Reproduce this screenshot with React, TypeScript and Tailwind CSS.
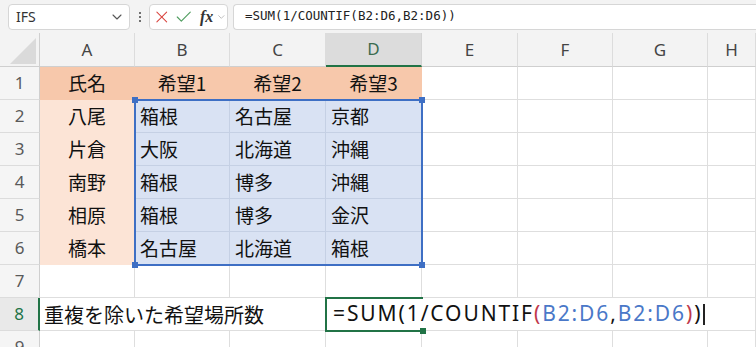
import { Check, ChevronDown, X } from "lucide-react";

const head = ["氏名", "希望1", "希望2", "希望3"];
const people = [
  ["八尾", "箱根", "名古屋", "京都"],
  ["片倉", "大阪", "北海道", "沖縄"],
  ["南野", "箱根", "博多", "沖縄"],
  ["相原", "箱根", "博多", "金沢"],
  ["橋本", "名古屋", "北海道", "箱根"],
];
const letters = ["A", "B", "C", "D", "E", "F", "G", "H"];

const jp = "font-['Noto_Sans_CJK_JP',sans-serif]";
const ui = "font-['Noto_Sans',sans-serif]";

function RowHead({ n, active }: { n: number; active?: boolean }) {
  return (
    <div
      className={`flex items-center justify-center border-b border-[#dcdcdc] text-[17px] ${ui} ${
        active
          ? "border-r-2 border-r-[#217346] bg-[#e9e9e9] text-[#217346]"
          : "border-r border-r-[#cfcfcf] bg-[#f5f5f5] text-[#5a5a5a]"
      }`}
    >
      {n}
    </div>
  );
}

function Blank() {
  return <div className="border-b border-r border-[#dedede] bg-white" />;
}

export default function App() {
  return (
    <div className="h-[347px] w-[756px] overflow-hidden bg-white">
      {/* formula bar */}
      <div className="flex h-[33px] items-center bg-[#f3f3f3] pl-2">
        <div className="flex h-[26px] w-[122px] items-center justify-between rounded-[4px] border border-[#d6d6d6] bg-white pl-[7px] pr-[4px]">
          <span className={`text-[14px] text-[#333] ${ui}`}>IFS</span>
          <ChevronDown size={16} strokeWidth={1.6} className="text-[#555]" />
        </div>
        <div className="ml-[9px] flex flex-col gap-[2px]">
          <span className="h-[2px] w-[2px] rounded-full bg-[#444]" />
          <span className="h-[2px] w-[2px] rounded-full bg-[#444]" />
          <span className="h-[2px] w-[2px] rounded-full bg-[#444]" />
        </div>
        <div className="ml-[8px] flex h-[26px] w-[79px] items-center rounded-[4px] border border-[#d6d6d6] bg-white">
          <X size={22} strokeWidth={1.3} className="ml-[2px] text-[#d9423d]" />
          <Check size={22} strokeWidth={1.4} className="ml-[2px] text-[#4f9d5f]" />
          <span className="ml-[7px] font-['Liberation_Serif',serif] text-[16px] font-bold italic leading-none text-[#333]">
            fx
          </span>
          <ChevronDown size={12} strokeWidth={1.4} className="ml-[3px] text-[#999]" />
        </div>
        <div className="ml-[5px] flex h-[26px] flex-1 items-center rounded-l-[4px] border border-r-0 border-[#d6d6d6] bg-white pl-[11px]">
          <span className="font-['DejaVu_Sans_Mono',monospace] text-[12.5px] text-[#222]">
            =SUM(1/COUNTIF(B2:D6,B2:D6))
          </span>
        </div>
      </div>

      {/* sheet */}
      <div className="relative grid grid-cols-[40px_95px_95px_96px_96px_96px_95px_95px_1fr] grid-rows-[34px_repeat(9,33px)]">
        {/* column headers */}
        <div className="relative border-b border-r border-[#cfcfcf] bg-[#f3f3f3]">
          <svg className="absolute bottom-[2px] right-[3px]" width="26" height="26" viewBox="0 0 26 26">
            <path d="M26 0 L26 26 L0 26 Z" fill="#dadada" />
          </svg>
        </div>
        {letters.map((l) => (
          <div
            key={l}
            className={`flex items-center justify-center text-[17px] ${ui} ${
              l === "D"
                ? "border-b-2 border-r border-b-[#217346] border-r-[#d4d4d4] bg-[#dcdcdc] text-[#3b6b4f]"
                : "border-b border-r border-b-[#cfcfcf] border-r-[#dcdcdc] bg-[#f3f3f3] text-[#444]"
            }`}
          >
            {l}
          </div>
        ))}

        {/* row 1 */}
        <RowHead n={1} />
        {head.map((h) => (
          <div
            key={h}
            className={`flex items-center justify-center border-b border-r border-[#f7c8ab] bg-[#f7c8ab] pt-[1px] text-[19px] text-[#111] ${jp}`}
          >
            {h}
          </div>
        ))}
        <Blank />
        <Blank />
        <Blank />
        <Blank />

        {/* rows 2-6 */}
        {people.map((row, i) => (
          <div key={i} className="contents">
            <RowHead n={i + 2} />
            <div className={`flex items-center justify-center border-b border-r border-[#fce4d6] bg-[#fce4d6] pt-[1px] text-[19px] text-[#111] ${jp}`}>
              {row[0]}
            </div>
            {row.slice(1).map((c, j) => (
              <div
                key={j}
                className={`flex items-center border-b border-r border-[#c5d0e4] bg-[#d9e2f3] pl-[5px] pt-[1px] text-[19px] text-[#111] ${jp}`}
              >
                {c}
              </div>
            ))}
            <Blank />
            <Blank />
            <Blank />
            <Blank />
          </div>
        ))}

        {/* row 7 */}
        <RowHead n={7} />
        {letters.map((l) => (
          <Blank key={l} />
        ))}

        {/* row 8 */}
        <RowHead n={8} active />
        <div className={`col-span-3 flex items-center whitespace-nowrap border-b border-[#dedede] pl-[4px] pt-[1px] text-[20px] text-[#111] ${jp}`}>
          重複を除いた希望場所数
        </div>
        <div className={`col-span-4 flex items-center whitespace-nowrap border-b border-[#dedede] pl-[7px] text-[21px] tracking-[1.9px] text-[#111] ${ui}`}>
          <span>=SUM(1/COUNTIF</span>
          <span className="text-[#c0394b]">(</span>
          <span className="text-[#4a78c8]">B2:D6</span>
          <span>,</span>
          <span className="text-[#4a78c8]">B2:D6</span>
          <span className="text-[#c0394b]">)</span>
          <span>)</span>
          <span className="ml-[1px] h-[21px] w-[1.5px] bg-[#222]" />
        </div>
        <Blank />

        {/* row 9 */}
        <RowHead n={9} />
        {letters.map((l) => (
          <Blank key={l} />
        ))}

        {/* reference highlight B2:D6 */}
        <div className="pointer-events-none absolute left-[134px] top-[66px] h-[167px] w-[289px] border-2 border-[#3e6fc4]">
          <span className="absolute -left-[4px] -top-[4px] h-[6px] w-[6px] bg-[#3e6fc4]" />
          <span className="absolute -right-[4px] -top-[4px] h-[6px] w-[6px] bg-[#3e6fc4]" />
          <span className="absolute -bottom-[4px] -left-[4px] h-[6px] w-[6px] bg-[#3e6fc4]" />
          <span className="absolute -bottom-[4px] -right-[4px] h-[6px] w-[6px] bg-[#3e6fc4]" />
        </div>

        {/* active cell D8 */}
        <div className="pointer-events-none absolute left-[325px] top-[264px] h-[35px] w-[98px] border-b-2 border-l-2 border-t-2 border-[#217346]">
          <span className="absolute -bottom-[4px] -right-[3px] h-[6px] w-[6px] bg-[#217346]" />
        </div>
      </div>
    </div>
  );
}
